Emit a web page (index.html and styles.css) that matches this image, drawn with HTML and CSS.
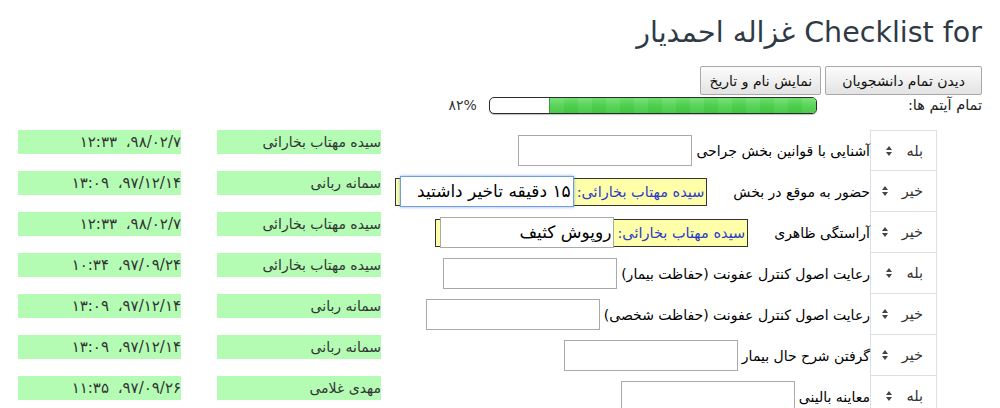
FILE: index.html
```html
<!DOCTYPE html>
<html lang="fa" dir="rtl">
<head>
<meta charset="utf-8">
<title>Checklist</title>
<link rel="stylesheet" href="styles.css">
</head>
<body>
<div class="page">
  <h1 class="title">Checklist for غزاله احمدیار</h1>
  <div class="toolbar">
    <button class="btn wide">دیدن تمام دانشجویان</button>
    <button class="btn">نمایش نام و تاریخ</button>
  </div>
  <div class="progress-row">
    <span class="progress-label">تمام آیتم ها:</span>
    <div class="bar"><div class="bar-fill" style="width:82%"></div></div>
    <span class="pct">۸۲%</span>
  </div>

  <div class="checklist">
    <div class="sel-cell first"><span class="sel">بله</span><svg class="arrows" width="6" height="10" viewBox="0 0 6 10"><path d="M0 4L3 0L6 4Z M0 6L3 10L6 6Z"/></svg></div>
    <div class="item"><span class="label">آشنایی با قوانین بخش جراحی</span><input class="field" type="text"></div>
    <div class="who"><span class="chip name">سیده مهتاب بخارائی</span></div>
    <div class="when"><span class="chip date">۹۸/۰۲/۷، ۱۲:۳۳</span></div>

    <div class="sel-cell"><span class="sel">خیر</span><svg class="arrows" width="6" height="10" viewBox="0 0 6 10"><path d="M0 4L3 0L6 4Z M0 6L3 10L6 6Z"/></svg></div>
    <div class="item"><span class="label">حضور به موقع در بخش</span><div class="comment"><span class="author">سیده مهتاب بخارائی:</span><input class="field inner focused" type="text" value="۱۵ دقیقه تاخیر داشتید"></div></div>
    <div class="who"><span class="chip name">سمانه ربانی</span></div>
    <div class="when"><span class="chip date">۹۷/۱۲/۱۴، ۱۳:۰۹</span></div>

    <div class="sel-cell"><span class="sel">خیر</span><svg class="arrows" width="6" height="10" viewBox="0 0 6 10"><path d="M0 4L3 0L6 4Z M0 6L3 10L6 6Z"/></svg></div>
    <div class="item"><span class="label">آراستگی ظاهری</span><div class="comment"><span class="author">سیده مهتاب بخارائی:</span><input class="field inner" type="text" value="روپوش کثیف"></div></div>
    <div class="who"><span class="chip name">سیده مهتاب بخارائی</span></div>
    <div class="when"><span class="chip date">۹۸/۰۲/۷، ۱۲:۳۳</span></div>

    <div class="sel-cell"><span class="sel">بله</span><svg class="arrows" width="6" height="10" viewBox="0 0 6 10"><path d="M0 4L3 0L6 4Z M0 6L3 10L6 6Z"/></svg></div>
    <div class="item"><span class="label">رعایت اصول کنترل عفونت (حفاظت بیمار)</span><input class="field" type="text"></div>
    <div class="who"><span class="chip name">سیده مهتاب بخارائی</span></div>
    <div class="when"><span class="chip date">۹۷/۰۹/۲۴، ۱۰:۳۴</span></div>

    <div class="sel-cell"><span class="sel">خیر</span><svg class="arrows" width="6" height="10" viewBox="0 0 6 10"><path d="M0 4L3 0L6 4Z M0 6L3 10L6 6Z"/></svg></div>
    <div class="item"><span class="label">رعایت اصول کنترل عفونت (حفاظت شخصی)</span><input class="field" type="text"></div>
    <div class="who"><span class="chip name">سمانه ربانی</span></div>
    <div class="when"><span class="chip date">۹۷/۱۲/۱۴، ۱۳:۰۹</span></div>

    <div class="sel-cell"><span class="sel">خیر</span><svg class="arrows" width="6" height="10" viewBox="0 0 6 10"><path d="M0 4L3 0L6 4Z M0 6L3 10L6 6Z"/></svg></div>
    <div class="item"><span class="label">گرفتن شرح حال بیمار</span><input class="field" type="text"></div>
    <div class="who"><span class="chip name">سمانه ربانی</span></div>
    <div class="when"><span class="chip date">۹۷/۱۲/۱۴، ۱۳:۰۹</span></div>

    <div class="sel-cell"><span class="sel">بله</span><svg class="arrows" width="6" height="10" viewBox="0 0 6 10"><path d="M0 4L3 0L6 4Z M0 6L3 10L6 6Z"/></svg></div>
    <div class="item"><span class="label">معاینه بالینی</span><input class="field" type="text"></div>
    <div class="who"><span class="chip name">مهدی غلامی</span></div>
    <div class="when"><span class="chip date">۹۷/۰۹/۲۶، ۱۱:۳۵</span></div>
  </div>
</div>
</body>
</html>
```

FILE: styles.css
```css
html, body {
  margin: 0;
  padding: 0;
  background: #fff;
}
body {
  font-family: "DejaVu Sans", Tahoma, sans-serif;
  font-size: 14px;
  color: #333;
  direction: rtl;
}
.page {
  padding: 16px 18px 0 18px;
}
.title {
  margin: 0;
  font-size: 28.5px;
  line-height: 34px;
  font-weight: normal;
  color: #2f3a45;
}
.toolbar {
  display: flex;
  gap: 4px;
  margin-top: 16px;
  height: 29px;
}
.btn {
  font-family: "DejaVu Sans", Tahoma, sans-serif;
  font-size: 14px;
  color: #111;
  height: 29px;
  padding: 0 8px;
  border: 1px solid #a9a9a9;
  border-radius: 2px;
  background: linear-gradient(#fcfcfc, #e3e3e3);
  direction: rtl;
}
.btn.wide {
  padding: 0 16px;
}
.progress-row {
  display: flex;
  align-items: center;
  height: 20px;
}
.progress-label {
  font-size: 14.5px;
  color: #222;
}
.bar {
  width: 328px;
  height: 17px;
  box-sizing: border-box;
  margin-right: 91px;
  border: 1px solid #2b2b2b;
  border-radius: 5px;
  background: #fff;
  overflow: hidden;
  box-shadow: 0 1px 1px rgba(0,0,0,0.25);
}
.bar-fill {
  height: 100%;
  background:
    repeating-linear-gradient(90deg, rgba(255,255,255,0.06) 0 14px, rgba(0,0,0,0.015) 14px 28px),
    linear-gradient(#72e072, #4fd24f 50%, #42c842);
  border-left: 1px solid #3a9a3a;
  box-sizing: border-box;
}
.pct {
  margin-right: 12px;
  font-size: 14px;
  color: #333;
}
.checklist {
  display: grid;
  grid-template-columns: 67px 1fr 166px 199px;
  grid-auto-rows: 41px;
  width: 919px;
  margin-top: 15px;
  margin-right: 45px;
}
.sel-cell {
  display: flex;
  align-items: center;
  gap: 14px;
  padding-right: 13px;
  border-left: 1px solid #dbe0e6;
  border-right: 1px solid #dbe0e6;
  border-bottom: 1px solid #dbe0e6;
  color: #333;
  font-size: 14.5px;
}
.sel-cell.first {
  border-top: 1px solid #dbe0e6;
}
.arrows {
  fill: #444;
}
.item {
  display: flex;
  align-items: center;
  min-width: 0;
}
.label {
  font-size: 14px;
  color: #000;
  white-space: nowrap;
}
.field {
  width: 174px;
  height: 31px;
  box-sizing: border-box;
  margin-right: 4px;
  border: 1px solid #aaa;
  background: #fff;
  padding: 0 2px;
  font-family: "DejaVu Sans", Tahoma, sans-serif;
  font-size: 17px;
  color: #000;
  direction: rtl;
  outline: none;
}
.comment {
  display: flex;
  align-items: center;
  height: 28px;
  box-sizing: border-box;
  margin-right: 26px;
  padding: 0 2px 0 4px;
  border: 1px solid #333;
  background: #ffffaa;
}
.author {
  font-size: 14.5px;
  color: #2a3bc9;
  white-space: nowrap;
}
.field.inner {
  height: 31px;
  margin: -2px 3px -1px 0;
}
.field.focused {
  border-color: #6e9de0;
  box-shadow: 0 0 3px rgba(90, 140, 220, 0.7);
}
.who, .when {
  display: flex;
  justify-content: flex-end;
  align-items: flex-start;
}
.chip {
  display: block;
  height: 24px;
  line-height: 24px;
  background: #b4fcb4;
  color: #333;
  font-size: 14px;
  white-space: nowrap;
  overflow: hidden;
}
.chip.name {
  width: 164px;
}
.chip.date {
  width: 163px;
  font-size: 15px;
  word-spacing: 4px;
}
```
